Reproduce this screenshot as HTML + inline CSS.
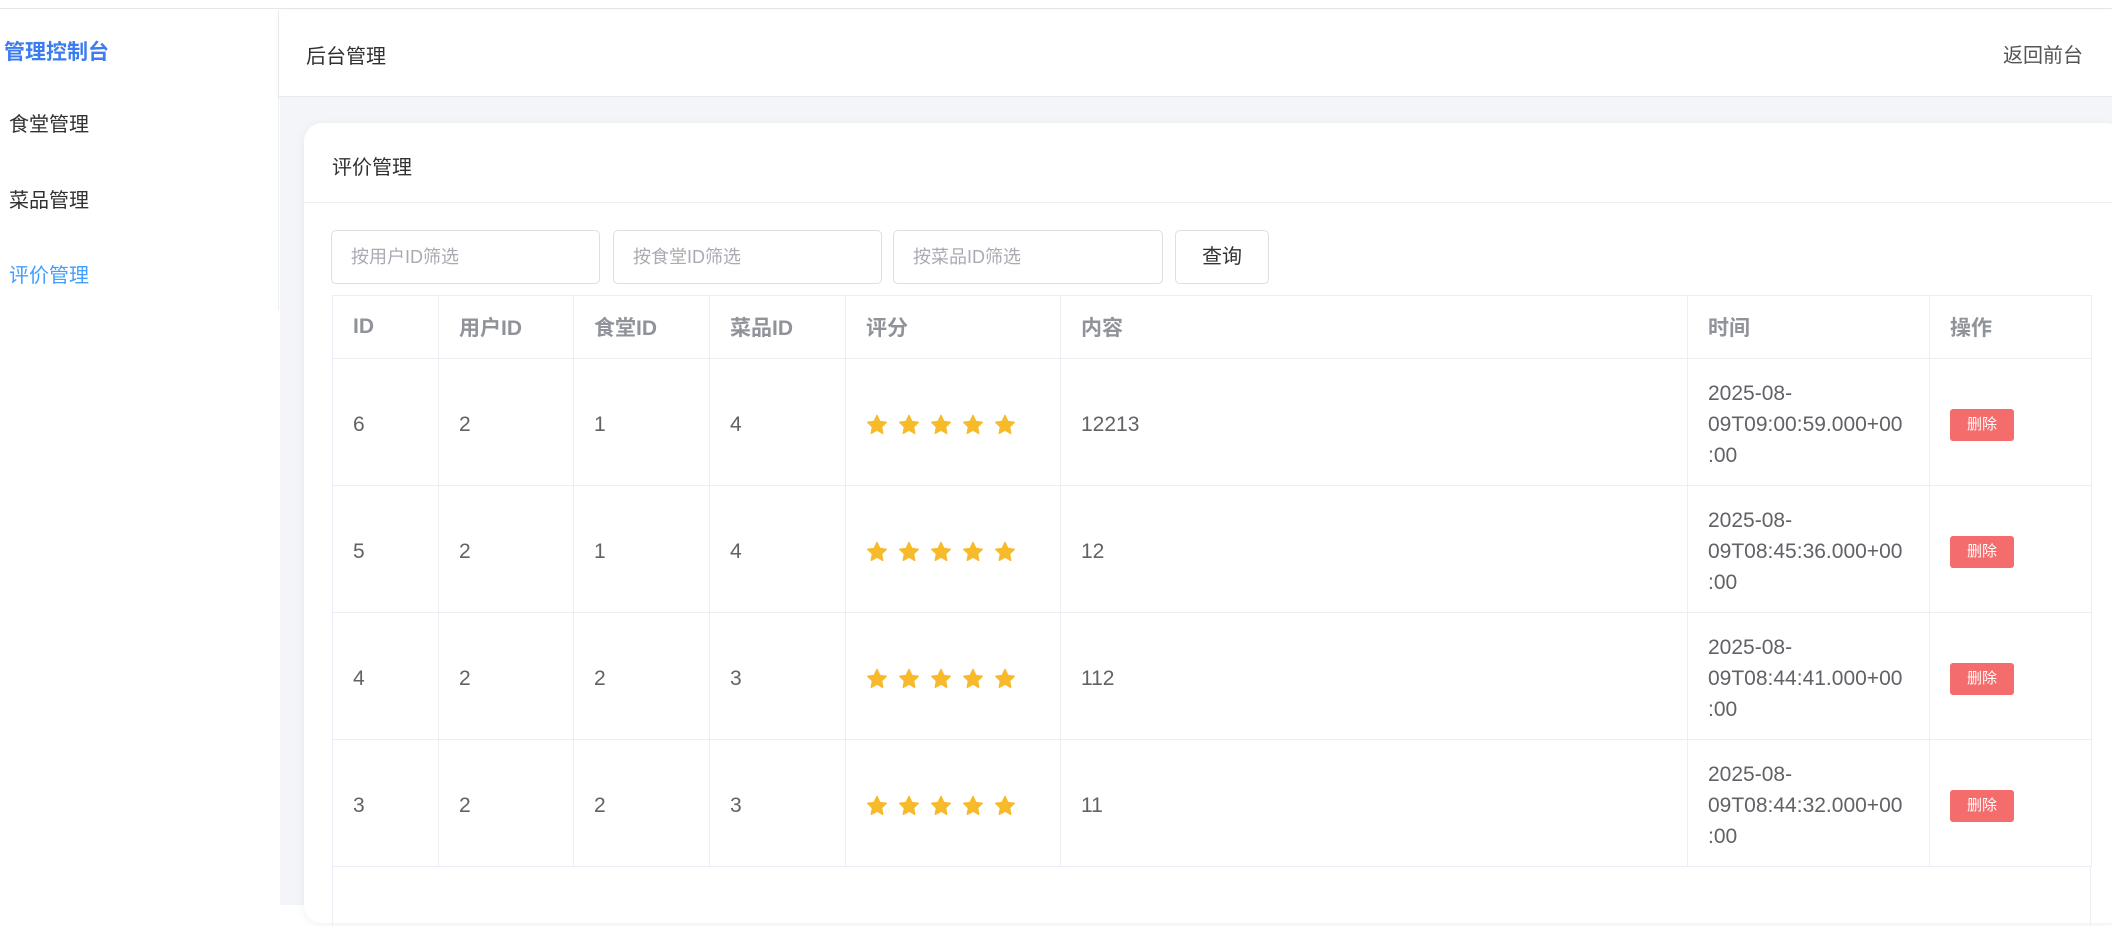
<!DOCTYPE html>
<html><head><meta charset="utf-8"><style>
*{box-sizing:border-box;margin:0;padding:0}
body{width:2112px;height:905px;overflow:hidden;background:#fff;font-family:"Liberation Sans","Noto Sans CJK SC",sans-serif;position:relative;color:#303133}
.topline{position:absolute;left:0;top:0;width:2112px;height:9px;border-bottom:1px solid #e4e6ea;background:#fff}
.side{position:absolute;left:0;top:10px;width:279px;height:300px;border-right:1px solid #eceef2}
.brand{position:absolute;left:4px;top:26px;font-size:21px;font-weight:bold;color:#3b7cf0}
.mi{position:absolute;left:9px;font-size:20px;color:#303133}
.hdr{position:absolute;left:279px;top:10px;width:1833px;height:87px;background:#fff;border-bottom:1px solid #e8e9ed;box-shadow:0 2px 6px rgba(0,0,0,.05)}
.main{position:absolute;left:280px;top:97px;width:1832px;height:808px;background:#f4f5f8}
.card{position:absolute;left:304px;top:123px;width:1820px;height:800px;background:#fff;border-radius:18px;box-shadow:0 2px 10px rgba(0,0,0,.06)}
.ct{position:absolute;left:28px;top:28px;font-size:20px;color:#303133}
.div{position:absolute;left:0;top:79px;width:100%;height:1px;background:#ebeef5}
.inp{position:absolute;top:107px;height:54px;border:1px solid #dcdfe6;border-radius:5px;font-size:18px;color:#a8abb2;padding-left:19px;line-height:52px}
.btn{position:absolute;left:871px;top:107px;width:94px;height:54px;border:1px solid #dcdfe6;border-radius:5px;font-size:20px;color:#303133;text-align:center;line-height:52px}
table{position:absolute;left:28px;top:172px;width:1759px;border-collapse:collapse;table-layout:fixed}
td,th{border:1px solid #ebeef5;text-align:left;padding-left:20px;font-size:21px;color:#606266;font-weight:normal;vertical-align:middle}
th{height:63px;color:#909399;font-weight:bold;font-size:21px}
td{height:127px;line-height:31px;padding-top:4px}
.stars svg{width:22px;height:22px;margin-right:10px;vertical-align:middle}
.del{display:inline-block;width:64px;height:32px;background:#f56c6c;color:#fff;border-radius:3px;font-size:15px;text-align:center;line-height:32px}
</style></head><body>
<svg width="0" height="0" style="position:absolute"><defs><symbol id="s" viewBox="0 0 24 24"><path fill="#f7ba2a" d="M12 1.5l3.1 6.6 7.1.9-5.2 5 1.3 7.1L12 17.6l-6.3 3.5 1.3-7.1-5.2-5 7.1-.9z" stroke="#f7ba2a" stroke-width="1.5" stroke-linejoin="round"/></symbol></defs></svg>
<div class="topline"></div>
<div class="side">
<div class="brand">管理控制台</div>
<div class="mi" style="top:98px">食堂管理</div>
<div class="mi" style="top:174px">菜品管理</div>
<div class="mi" style="top:249px;color:#409eff">评价管理</div>
</div>
<div class="hdr">
<div style="position:absolute;left:27px;top:30px;font-size:20px;color:#303133">后台管理</div>
<div style="position:absolute;left:1724px;top:29px;font-size:20px;color:#555">返回前台</div>
</div>
<div class="main"></div>
<div class="card">
<div class="ct">评价管理</div>
<div class="div"></div>
<div class="inp" style="left:27px;width:269px">按用户ID筛选</div>
<div class="inp" style="left:309px;width:269px">按食堂ID筛选</div>
<div class="inp" style="left:589px;width:270px">按菜品ID筛选</div>
<div class="btn">查询</div>
<table>
<colgroup><col style="width:106px"><col style="width:135px"><col style="width:136px"><col style="width:136px"><col style="width:215px"><col style="width:627px"><col style="width:242px"><col style="width:162px"></colgroup>
<tr><th>ID</th><th>用户ID</th><th>食堂ID</th><th>菜品ID</th><th>评分</th><th>内容</th><th>时间</th><th>操作</th></tr>
<tr><td>6</td><td>2</td><td>1</td><td>4</td><td class="stars"><svg><use href="#s"/></svg><svg><use href="#s"/></svg><svg><use href="#s"/></svg><svg><use href="#s"/></svg><svg><use href="#s"/></svg></td><td>12213</td><td>2025-08-<br>09T09:00:59.000+00<br>:00</td><td><span class="del">删除</span></td></tr>
<tr><td>5</td><td>2</td><td>1</td><td>4</td><td class="stars"><svg><use href="#s"/></svg><svg><use href="#s"/></svg><svg><use href="#s"/></svg><svg><use href="#s"/></svg><svg><use href="#s"/></svg></td><td>12</td><td>2025-08-<br>09T08:45:36.000+00<br>:00</td><td><span class="del">删除</span></td></tr>
<tr><td>4</td><td>2</td><td>2</td><td>3</td><td class="stars"><svg><use href="#s"/></svg><svg><use href="#s"/></svg><svg><use href="#s"/></svg><svg><use href="#s"/></svg><svg><use href="#s"/></svg></td><td>112</td><td>2025-08-<br>09T08:44:41.000+00<br>:00</td><td><span class="del">删除</span></td></tr>
<tr><td>3</td><td>2</td><td>2</td><td>3</td><td class="stars"><svg><use href="#s"/></svg><svg><use href="#s"/></svg><svg><use href="#s"/></svg><svg><use href="#s"/></svg><svg><use href="#s"/></svg></td><td>11</td><td>2025-08-<br>09T08:44:32.000+00<br>:00</td><td><span class="del">删除</span></td></tr>
</table>
<div style="position:absolute;left:28px;top:743px;width:1759px;height:60px;border-left:1px solid #ebeef5;border-right:1px solid #ebeef5"></div>
</div>
</body></html>
